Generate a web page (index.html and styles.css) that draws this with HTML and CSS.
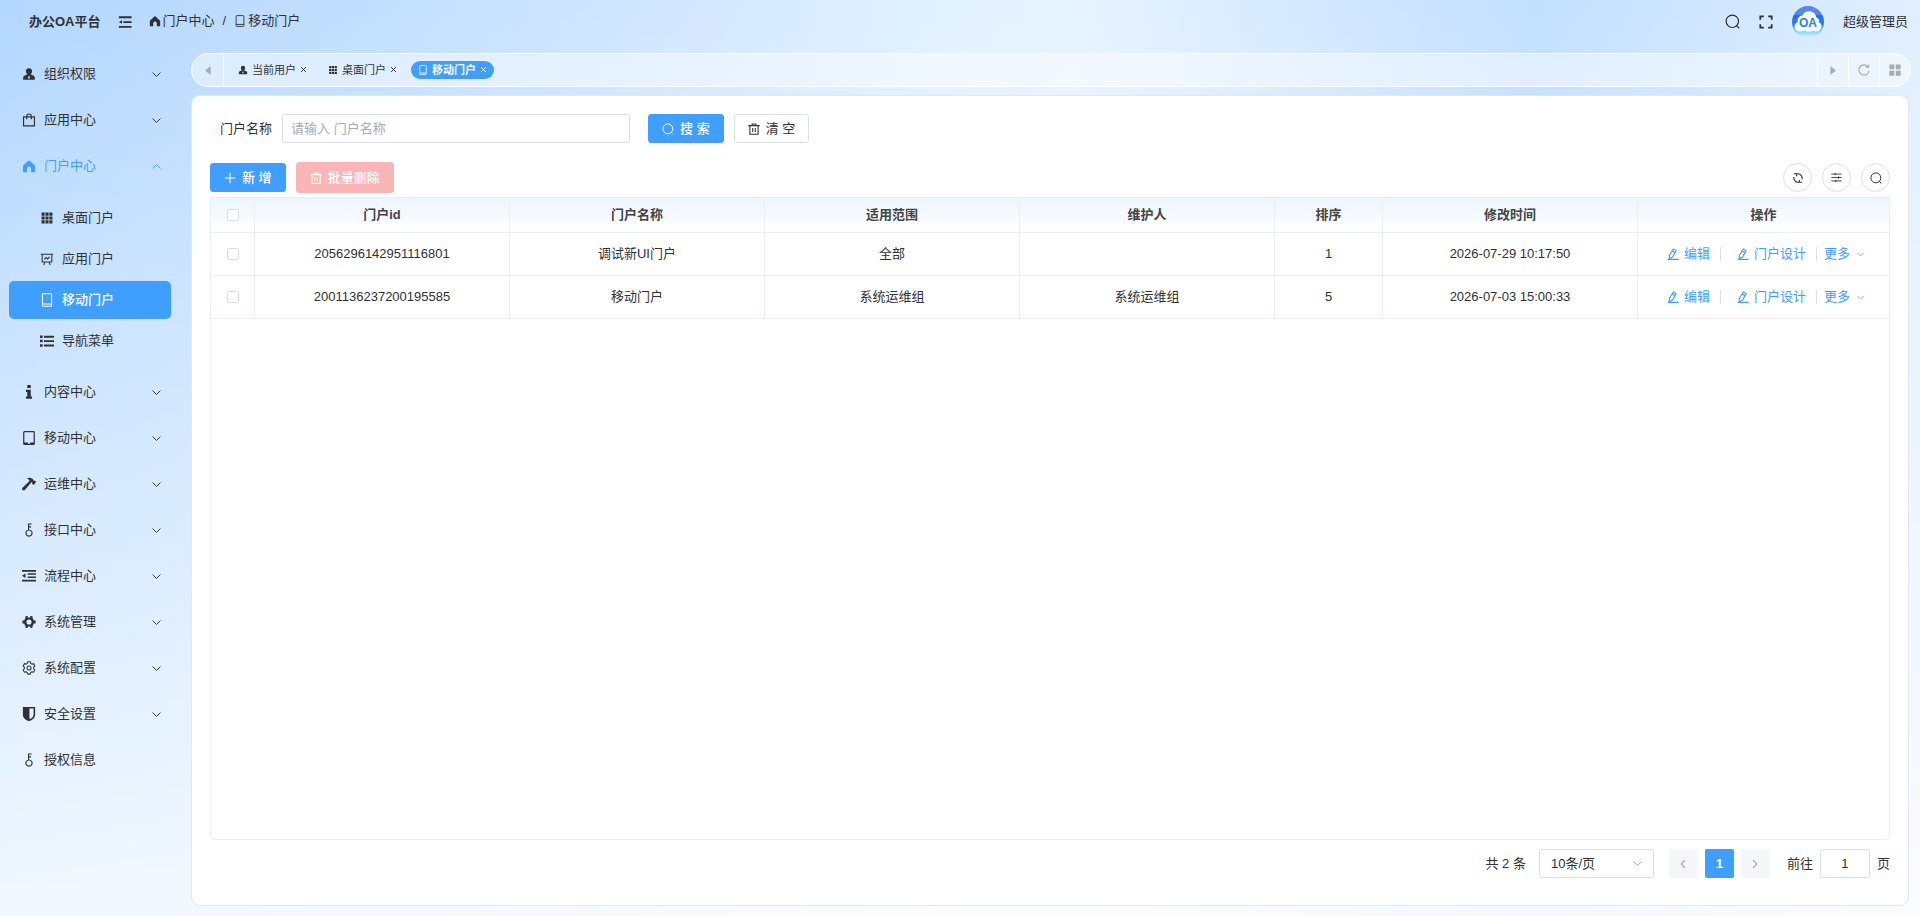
FILE: index.html
```html
<!DOCTYPE html>
<html lang="zh-CN">
<head>
    <meta charset="UTF-8">
    <meta name="viewport" content="width=device-width, initial-scale=1.0">
    <title>办公OA平台</title>
    <link rel="stylesheet" href="styles.css">
</head>
<body>
    <!-- Icon sprite -->
    <svg class="sprite" aria-hidden="true">
        <symbol id="i-user" viewBox="-1 -1 18 18"><path fill="currentColor" d="M8 .5a3.900 3.900 0 0 0-3.900 3.900c0 1.700.8 3.200 2 4L2 10.200C1 10.800.5 11.500.5 12.500V15.500h15v-3c0-1-.5-1.700-1.500-2.300L9.900 8.400c1.200-.8 2-2.300 2-4A3.900 3.900 0 0 0 8 .5zM7.300 10.500h1.400l.5 2.700L8 14.300l-1.200-1.100z" fill-rule="evenodd"/></symbol>
        <symbol id="i-bag" viewBox="-1 -1 18 18"><path fill="none" stroke="currentColor" stroke-width="1.500" d="M1 4h14v11.500H1zM5 7V3a3 2.700 0 0 1 6 0V7"/></symbol>
        <symbol id="i-home" viewBox="-1 -1 18 18"><path fill="currentColor" d="M8 .5.300 7.500V16h5v-4.500a2.700 2.700 0 0 1 5.400 0V16h5V7.500z"/></symbol>
        <symbol id="i-grid" viewBox="0 0 18 18"><path fill="currentColor" d="M2 2h4v4H2zM7 2h4v4H7zM12 2h4v4h-4zM2 7h4v4H2zM7 7h4v4H7zM12 7h4v4h-4zM2 12h4v4H2zM7 12h4v4H7zM12 12h4v4h-4z"/></symbol>
        <symbol id="i-board" viewBox="0 0 16 16"><path fill="none" stroke="currentColor" stroke-width="1.200" d="M1 2.500h14M2.500 2.500v9h11v-9M5.500 11.500 4.300 15M10.500 11.500l1.200 3.500M4.900 8.500 7 6.300l1.600 1.600L11 5.500"/></symbol>
        <symbol id="i-phone" viewBox="0 0 16 16"><path fill="none" stroke="currentColor" stroke-width="1.200" d="M3.800.8h8.400a1 1 0 0 1 1 1v12.400a1 1 0 0 1-1 1H3.800a1 1 0 0 1-1-1V1.800a1 1 0 0 1 1-1zM2.800 12.600h10.400"/></symbol>
        <symbol id="i-list" viewBox="0 0 16 16"><path fill="currentColor" d="M0 1.700h3v2.800H0zM4.500 2H16v2.200H4.500zM0 6.700h3v2.800H0zM4.500 7H16v2.200H4.500zM0 11.700h3v2.800H0zM4.500 12H16v2.200H4.500z"/></symbol>
        <symbol id="i-info" viewBox="0 0 16 16"><path fill="currentColor" d="M6 0h4v3.500H6zM4.500 5.500H10V13h1.500v2.700h-7V13H6V8H4.500z"/></symbol>
        <symbol id="i-tablet" viewBox="0 0 16 16"><path fill="none" stroke="currentColor" stroke-width="1.400" d="M3 .7h10a1 1 0 0 1 1 1v12.600a1 1 0 0 1-1 1H3a1 1 0 0 1-1-1V1.700a1 1 0 0 1 1-1z"/><path fill="currentColor" d="M2 13h4.800v2.300H2zM9.200 13H14v2.300H9.200z"/></symbol>
        <symbol id="i-hammer" viewBox="0 0 16 16"><path fill="currentColor" d="M5.500 1.500C8 .3 10.800.7 12.500 2.700l1 1.800 1.300-.5L16 5.700 13.500 9l-1.900-1.400.1-1.300-.7-.5L3 15.200.3 15l-.1-2.300L8.700 4.700C8 3 7 2.300 5.500 1.500z"/></symbol>
        <symbol id="i-key" viewBox="0 0 16 16"><path fill="none" stroke="currentColor" stroke-width="1.300" d="M8 8a3.500 3.500 0 1 0 .01 0zM7.500 8V1.200h3.500M7.500 4.400h2.900"/></symbol>
        <symbol id="i-fold" viewBox="0 0 16 16"><path fill="currentColor" d="M0 1h16v2.200H0zM6.500 4.800h9.500v1.900H6.500zM6.500 8.500h9.500v1.900H6.500zM0 12.200h16v2.200H0zM0 7.700 4 5v5.300z"/></symbol>
        <symbol id="i-menu" viewBox="0 0 16 16"><path fill="currentColor" d="M1 1.500h14.500v2.200H1zM6 7h9.500v2H6zM1 12.500h14.500v2.200H1zM1 8l3.500-2v4z"/></symbol>
        <symbol id="i-gear" viewBox="-1 -1 18 18"><path fill="currentColor" fill-rule="evenodd" d="M3.800.3h2.500v1.900h3.400V.3h2.500l.6 2.800 1.500 3H16.500v3.800h-2.200l-1.500 3-.6 2.800H9.700v-1.900H6.300v1.900H3.800l-.6-2.800-1.500-3H-.5V6.100h2.200l1.500-3zM8 4.700a3.300 3.300 0 1 0 0 6.600 3.300 3.300 0 0 0 0-6.600z"/></symbol>
        <symbol id="i-setting" viewBox="0 0 16 16"><path fill="none" stroke="currentColor" stroke-width="1.200" stroke-linejoin="round" d="M6.500.9h3l.5 1.900 1.300.8 1.900-.6 1.500 2.600-1.400 1.500v1.700l1.400 1.500-1.500 2.600-1.900-.6-1.300.8-.5 1.900h-3L6 13.100l-1.300-.8-1.900.6-1.500-2.600 1.400-1.500V7.100L1.300 5.600 2.800 3l1.900.6L6 2.800z"/><circle cx="8" cy="8" r="2.300" fill="none" stroke="currentColor" stroke-width="1.200"/></symbol>
        <symbol id="i-shield" viewBox="0 0 16 16"><path fill="currentColor" fill-rule="evenodd" d="M1 0h14v9c0 3.500-3.300 5.800-7 7-3.700-1.200-7-3.500-7-7zM8.500 1.800v12c2.500-1 4.700-2.500 4.700-5v-7z"/></symbol>
        <symbol id="i-down" viewBox="0 0 16 16"><path fill="none" stroke="currentColor" stroke-width="1.700" d="M1 4.500l7 7 7-7"/></symbol>
        <symbol id="i-up" viewBox="0 0 16 16"><path fill="none" stroke="currentColor" stroke-width="1.700" d="M1 11.500l7-7 7 7"/></symbol>
        <symbol id="i-left" viewBox="0 0 16 16"><path fill="none" stroke="currentColor" stroke-width="1.600" d="M10.500 3l-5 5 5 5"/></symbol>
        <symbol id="i-right" viewBox="0 0 16 16"><path fill="none" stroke="currentColor" stroke-width="1.600" d="M5.500 3l5 5-5 5"/></symbol>
        <symbol id="i-close" viewBox="0 0 16 16"><path fill="none" stroke="currentColor" stroke-width="2.200" d="M2.500 2.500l11 11M13.500 2.500l-11 11"/></symbol>
        <symbol id="i-search" viewBox="0 0 16 16"><circle cx="7.800" cy="7.800" r="6.600" fill="none" stroke="currentColor" stroke-width="1.300"/><path stroke="currentColor" stroke-width="1.300" d="M12.400 12.400l2.800 2.800"/></symbol>
        <symbol id="i-full" viewBox="0 0 16 16"><path fill="none" stroke="currentColor" stroke-width="2" d="M1.500 5.500v-4h4M10.500 1.500h4v4M14.500 10.500v4h-4M5.500 14.500h-4v-4"/></symbol>
        <symbol id="i-caret-left" viewBox="0 0 16 16"><path fill="currentColor" d="M11.500 2.500v12L4 8.500z"/></symbol>
        <symbol id="i-caret-right" viewBox="0 0 16 16"><path fill="currentColor" d="M4.500 2.500v12l7.500-6z"/></symbol>
        <symbol id="i-reload" viewBox="0 0 16 16"><path fill="none" stroke="currentColor" stroke-width="1.500" d="M14.800 9A6.800 6.800 0 1 1 13.300 3.600M14.300.5v3.700h-3.800"/></symbol>
        <symbol id="i-windows" viewBox="0 0 16 16"><path fill="currentColor" d="M.5.500h6.500v6.500H.5zM9 .5h6.500v6.500H9zM.5 9h6.500v6.500H.5zM9 9h6.500v6.500H9z"/></symbol>
        <symbol id="i-trash" viewBox="0 0 16 16"><path fill="none" stroke="currentColor" stroke-width="1.400" d="M.5 3.500h15M5.500 3.500V1.300h5v2.200M2.500 3.500V15h11V3.500M6.300 6.500v5.500M9.700 6.500v5.500"/></symbol>
        <symbol id="i-plus" viewBox="0 0 16 16"><path stroke="currentColor" stroke-width="1.400" d="M8 1v14M1 8h14"/></symbol>
        <symbol id="i-refresh" viewBox="0 0 16 16"><path fill="none" stroke="currentColor" stroke-width="1.500" d="M6 2.800A5.500 5.500 0 0 1 13.500 8v1.500M10 13.200A5.500 5.500 0 0 1 2.500 8V6.500M2.500 2.300h3.700v3.200M13.500 13.700H9.800v-3.200"/></symbol>
        <symbol id="i-filter" viewBox="0 0 16 16"><path fill="none" stroke="currentColor" stroke-width="1.300" d="M.5 3h15M.5 8h15M.5 13h15M6 1.300v3.400M11 6.300v3.400M7 11.300v3.400"/></symbol>
        <symbol id="i-edit" viewBox="0 0 16 16"><path fill="none" stroke="currentColor" stroke-width="1.500" d="M8.500 1.300l3.600 2.200-4.600 8.500-4.600 2.200.3-4.700zM7 4l3.800 2.200M1 15.200h14.500"/></symbol>
    </svg>

    <div class="layout">
        <!-- Top bar -->
        <header class="header">
            <h1 class="logo">办公OA平台</h1>
            <button class="icon-btn menu-btn" aria-label="折叠菜单"><svg class="icon-md"><use href="#i-menu"/></svg></button>
            <nav class="breadcrumb">
                <a href="#"><svg class="icon-sm"><use href="#i-home"/></svg>门户中心</a>
                <span class="slash">/</span>
                <a href="#"><svg class="icon-sm"><use href="#i-phone"/></svg>移动门户</a>
            </nav>
            <div class="header-right">
                <button class="icon-btn" aria-label="搜索"><svg class="icon-lg"><use href="#i-search"/></svg></button>
                <button class="icon-btn" aria-label="全屏"><svg class="icon-md"><use href="#i-full"/></svg></button>
                <div class="avatar">
                    <svg viewBox="0 0 32 32">
                        <defs>
                            <linearGradient id="sky" x1="0" y1="0" x2="0" y2="1">
                                <stop offset="0" stop-color="#5d86e8"/>
                                <stop offset=".28" stop-color="#5488e9"/>
                                <stop offset=".3" stop-color="#2868df"/>
                                <stop offset=".6" stop-color="#2f8ae6"/>
                                <stop offset=".78" stop-color="#7fd0f5"/>
                                <stop offset="1" stop-color="#e2f7fd"/>
                            </linearGradient>
                        </defs>
                        <circle cx="16" cy="16" r="16" fill="url(#sky)"/>
                        <path fill="#f4f9ff" d="M8 25.500c-3.500 0-5.500-2.400-5.500-5 0-2.300 1.300-4 3.300-4.600C5 12.500 7 9.600 10.500 9.500 11.700 6.800 14 5.300 17 5.300c4 0 6.800 2.600 7.200 6 2.500 1 3.300 2.900 2.800 5 1.800.9 2.700 2.500 2.500 4.500-.3 2.700-2.300 4.700-5 4.700-1.400 0-2-.3-3-.8-2.800 1.300-6.500 1.300-9 0-1.200.6-2.700.8-4.500.8z"/>
                    </svg>
                    <span>OA</span>
                </div>
                <span class="username">超级管理员</span>
            </div>
        </header>

        <!-- Sidebar menu -->
        <nav class="sidebar">
            <a class="menu-item" href="#"><svg class="icon-md"><use href="#i-user"/></svg>组织权限<svg class="arrow"><use href="#i-down"/></svg></a>
            <a class="menu-item" href="#"><svg class="icon-md"><use href="#i-bag"/></svg>应用中心<svg class="arrow"><use href="#i-down"/></svg></a>
            <a class="menu-item open" href="#"><svg class="icon-md"><use href="#i-home"/></svg>门户中心<svg class="arrow"><use href="#i-up"/></svg></a>
            <div class="submenu">
                <a href="#"><svg class="icon-md"><use href="#i-grid"/></svg>桌面门户</a>
                <a href="#"><svg class="icon-md"><use href="#i-board"/></svg>应用门户</a>
                <a class="active" href="#"><svg class="icon-md"><use href="#i-phone"/></svg>移动门户</a>
                <a href="#"><svg class="icon-md"><use href="#i-list"/></svg>导航菜单</a>
            </div>
            <a class="menu-item" href="#"><svg class="icon-md"><use href="#i-info"/></svg>内容中心<svg class="arrow"><use href="#i-down"/></svg></a>
            <a class="menu-item" href="#"><svg class="icon-md"><use href="#i-tablet"/></svg>移动中心<svg class="arrow"><use href="#i-down"/></svg></a>
            <a class="menu-item" href="#"><svg class="icon-md"><use href="#i-hammer"/></svg>运维中心<svg class="arrow"><use href="#i-down"/></svg></a>
            <a class="menu-item" href="#"><svg class="icon-md"><use href="#i-key"/></svg>接口中心<svg class="arrow"><use href="#i-down"/></svg></a>
            <a class="menu-item" href="#"><svg class="icon-md"><use href="#i-fold"/></svg>流程中心<svg class="arrow"><use href="#i-down"/></svg></a>
            <a class="menu-item" href="#"><svg class="icon-md"><use href="#i-gear"/></svg>系统管理<svg class="arrow"><use href="#i-down"/></svg></a>
            <a class="menu-item" href="#"><svg class="icon-md"><use href="#i-setting"/></svg>系统配置<svg class="arrow"><use href="#i-down"/></svg></a>
            <a class="menu-item" href="#"><svg class="icon-md"><use href="#i-shield"/></svg>安全设置<svg class="arrow"><use href="#i-down"/></svg></a>
            <a class="menu-item" href="#"><svg class="icon-md"><use href="#i-key"/></svg>授权信息</a>
        </nav>

        <main class="main">
            <!-- Opened tabs -->
            <div class="tabs">
                <button class="tabs-btn first" aria-label="向左"><svg class="icon-sm"><use href="#i-caret-left"/></svg></button>
                <div class="tab-list">
                    <a class="tab" href="#"><svg class="icon-tab"><use href="#i-user"/></svg>当前用户<svg class="close"><use href="#i-close"/></svg></a>
                    <a class="tab" href="#"><svg class="icon-tab"><use href="#i-grid"/></svg>桌面门户<svg class="close"><use href="#i-close"/></svg></a>
                    <a class="tab active" href="#"><svg class="icon-tab"><use href="#i-phone"/></svg>移动门户<svg class="close"><use href="#i-close"/></svg></a>
                </div>
                <button class="tabs-btn" aria-label="向右"><svg class="icon-sm"><use href="#i-caret-right"/></svg></button>
                <button class="tabs-btn" aria-label="刷新"><svg class="icon-sm"><use href="#i-reload"/></svg></button>
                <button class="tabs-btn" aria-label="更多操作"><svg class="icon-sm"><use href="#i-windows"/></svg></button>
            </div>

            <section class="card">
                <!-- Search form -->
                <form class="search-form">
                    <label for="portalName">门户名称</label>
                    <input type="text" id="portalName" placeholder="请输入 门户名称">
                    <button type="button" class="btn primary"><svg class="icon-sm"><use href="#i-search"/></svg>搜 索</button>
                    <button type="reset" class="btn"><svg class="icon-sm"><use href="#i-trash"/></svg>清 空</button>
                </form>

                <!-- Toolbar -->
                <div class="toolbar">
                    <button class="btn primary"><svg class="icon-sm"><use href="#i-plus"/></svg>新 增</button>
                    <button class="btn danger" disabled><svg class="icon-sm"><use href="#i-trash"/></svg>批量删除</button>
                    <div class="tools">
                        <button class="circle" aria-label="刷新"><svg class="icon-sm"><use href="#i-refresh"/></svg></button>
                        <button class="circle" aria-label="列设置"><svg class="icon-xs"><use href="#i-filter"/></svg></button>
                        <button class="circle" aria-label="显示搜索"><svg class="icon-sm"><use href="#i-search"/></svg></button>
                    </div>
                </div>

                <div class="table-wrap">
                    <table>
                        <colgroup>
                            <col class="col-check"><col class="col-text"><col class="col-text"><col class="col-text"><col class="col-text"><col class="col-sort"><col class="col-text"><col class="col-action">
                        </colgroup>
                        <thead>
                            <tr>
                                <th><input type="checkbox" aria-label="全选"></th>
                                <th>门户id</th>
                                <th>门户名称</th>
                                <th>适用范围</th>
                                <th>维护人</th>
                                <th>排序</th>
                                <th>修改时间</th>
                                <th>操作</th>
                            </tr>
                        </thead>
                        <tbody>
                            <tr>
                                <td><input type="checkbox" aria-label="选择行"></td>
                                <td>2056296142951116801</td>
                                <td>调试新UI门户</td>
                                <td>全部</td>
                                <td></td>
                                <td>1</td>
                                <td>2026-07-29 10:17:50</td>
                                <td>
                                    <div class="actions">
                                        <a href="#"><svg class="icon-sm"><use href="#i-edit"/></svg>编辑</a>
                                        <a href="#"><svg class="icon-sm"><use href="#i-edit"/></svg>门户设计</a>
                                        <a class="more" href="#">更多<svg class="arrow-sm"><use href="#i-down"/></svg></a>
                                    </div>
                                </td>
                            </tr>
                            <tr>
                                <td><input type="checkbox" aria-label="选择行"></td>
                                <td>2001136237200195585</td>
                                <td>移动门户</td>
                                <td>系统运维组</td>
                                <td>系统运维组</td>
                                <td>5</td>
                                <td>2026-07-03 15:00:33</td>
                                <td>
                                    <div class="actions">
                                        <a href="#"><svg class="icon-sm"><use href="#i-edit"/></svg>编辑</a>
                                        <a href="#"><svg class="icon-sm"><use href="#i-edit"/></svg>门户设计</a>
                                        <a class="more" href="#">更多<svg class="arrow-sm"><use href="#i-down"/></svg></a>
                                    </div>
                                </td>
                            </tr>
                        </tbody>
                    </table>
                </div>

                <!-- Pagination -->
                <div class="pagination">
                    <span class="total">共 2 条</span>
                    <div class="page-size">
                        <select aria-label="每页条数">
                            <option>10条/页</option>
                            <option>20条/页</option>
                            <option>50条/页</option>
                        </select>
                        <svg class="arrow"><use href="#i-down"/></svg>
                    </div>
                    <div class="pager">
                        <button disabled aria-label="上一页"><svg class="icon-sm"><use href="#i-left"/></svg></button>
                        <button class="active">1</button>
                        <button disabled aria-label="下一页"><svg class="icon-sm"><use href="#i-right"/></svg></button>
                    </div>
                    <label for="jumper">前往</label>
                    <input type="text" id="jumper" value="1">
                    <span>页</span>
                </div>
            </section>
        </main>
    </div>
</body>
</html>
```
FILE: styles.css
```css
* {
    box-sizing: border-box;
}

body {
    margin: 0;
    font-family: "Liberation Sans", "Noto Sans CJK SC", sans-serif;
    font-size: 13px;
    line-height: 20px;
    color: #303133;
}

a {
    color: inherit;
    text-decoration: none;
}

button, input, select {
    font: inherit;
    color: inherit;
}

button {
    padding: 0;
    border: none;
    background: none;
    cursor: pointer;
}

svg {
    display: block;
    flex: none;
}

.sprite {
    display: none;
}

/* Icon sizes */
.icon-lg {
    width: 15px;
    height: 15px;
}

.icon-md {
    width: 14px;
    height: 14px;
}

.icon-sm {
    width: 12px;
    height: 12px;
}

.icon-xs {
    width: 11px;
    height: 11px;
}

.icon-tab {
    width: 10px;
    height: 10px;
}

.arrow {
    width: 9px;
    height: 9px;
}

/* Page layout */
.layout {
    display: grid;
    grid-template-columns: 191px 1fr;
    grid-template-rows: 43px 1fr;
    min-height: 100vh;
    background:
        linear-gradient(180deg, rgba(255, 255, 255, 0), rgba(255, 255, 255, 0.82)),
        linear-gradient(90deg, #b3d7ff 0%, #c2dfff 20%, #d1e6ff 34%, #e2f1ff 49%, #e6f3ff 56%, #dfeeff 62%, #cde4ff 73%, #c2dfff 80%, #e0efff 100%);
}

/* Header */
.header {
    grid-column: 1 / 3;
    display: flex;
    align-items: center;
    padding: 0 12px 0 29px;
}

.logo {
    margin: 0;
    font-size: 13px;
    font-weight: bold;
}

.menu-btn {
    margin: 0 17px;
}

.breadcrumb {
    display: flex;
    align-items: center;
    gap: 8px;
    padding-bottom: 2px;
}

.breadcrumb a {
    display: flex;
    align-items: center;
    gap: 2px;
}

.header-right {
    display: flex;
    align-items: center;
    gap: 19px;
    margin-left: auto;
}

.avatar {
    position: relative;
    width: 32px;
    height: 32px;
}

.avatar span {
    position: absolute;
    inset: 0;
    text-align: center;
    font-size: 12px;
    line-height: 34px;
    font-weight: bold;
    color: #2d7fe0;
}

/* Sidebar */
.sidebar {
    padding-top: 8px;
}

.menu-item {
    display: flex;
    align-items: center;
    gap: 8px;
    height: 46px;
    padding: 0 30px 0 22px;
}

.menu-item .arrow {
    margin-left: auto;
}

.menu-item.open {
    color: #409eff;
}

.submenu {
    display: flex;
    flex-direction: column;
    gap: 3px;
    padding: 10px 20px 9px 9px;
}

.submenu a {
    display: flex;
    align-items: center;
    gap: 8px;
    height: 38px;
    padding-left: 31px;
    border-radius: 5px;
}

.submenu .active {
    background: #409eff;
    color: #fff;
    font-weight: 500;
}

/* Main area */
.main {
    display: flex;
    flex-direction: column;
    gap: 8px;
    min-width: 0;
    padding: 10px 9px 10px 0;
}

/* Tabs */
.tabs {
    display: flex;
    height: 34px;
    border: 1px solid #fff;
    border-radius: 17px;
    background: rgba(255, 255, 255, 0.45);
}

.tabs-btn {
    display: flex;
    align-items: center;
    justify-content: center;
    width: 31px;
    border-left: 1px solid #fff;
    color: #a8abb2;
}

.tabs-btn.first {
    width: 32px;
    border-left: none;
    border-right: 1px solid #fff;
}

.tab-list {
    flex: 1;
    display: flex;
    align-items: center;
    gap: 7px;
    padding-left: 7px;
    padding-bottom: 1px;
}

.tab {
    display: flex;
    align-items: center;
    gap: 4px;
    height: 18px;
    padding: 0 7px;
    border-radius: 9px;
    font-size: 11px;
    line-height: 18px;
}

.tab.active {
    background: #409eff;
    color: #fff;
    font-weight: bold;
}

.close {
    width: 7px;
    height: 7px;
}

/* Content card */
.card {
    flex: 1;
    display: flex;
    flex-direction: column;
    margin-right: 2px;
    padding: 18px 18px 27px;
    border: 1px solid #e4e7ed;
    border-radius: 9px;
    background: #fff;
}

input[type="text"], select {
    height: 29px;
    border: 1px solid #dcdfe6;
    border-radius: 3px;
    background: #fff;
    outline: none;
}

input[type="text"]:focus {
    border-color: #409eff;
}

.btn {
    display: flex;
    align-items: center;
    gap: 6px;
    height: 29px;
    padding: 0 13px;
    border: 1px solid #dcdfe6;
    border-radius: 3px;
    background: #fff;
}

.btn.primary {
    border-color: #409eff;
    background: #409eff;
    color: #fff;
    font-weight: 500;
}

.btn.danger {
    height: 31px;
    border-color: #fab6b6;
    background: #fab6b6;
    color: #fff;
    font-weight: 500;
    cursor: not-allowed;
}

/* Search form */
.search-form {
    display: flex;
    align-items: center;
    gap: 10px;
    margin: 0 0 19px;
    padding-left: 10px;
}

.search-form input {
    width: 348px;
    margin-right: 8px;
    padding: 0 8px;
}

.search-form input::placeholder {
    color: #a8abb2;
}

/* Toolbar */
.toolbar {
    display: flex;
    align-items: center;
    gap: 10px;
    margin-bottom: 4px;
}

.tools {
    display: flex;
    gap: 10px;
    margin-left: auto;
}

.circle {
    display: flex;
    align-items: center;
    justify-content: center;
    width: 29px;
    height: 29px;
    border: 1px solid #dcdfe6;
    border-radius: 50%;
}

/* Table */
.table-wrap {
    flex: 1;
    border: 1px solid #ebeef5;
    border-radius: 0 0 4px 4px;
}

table {
    width: 100%;
    table-layout: fixed;
    border-collapse: separate;
    border-spacing: 0;
}

.col-check {
    width: 44px;
}

.col-sort {
    width: 108px;
}

.col-action {
    width: 251px;
}

th, td {
    padding: 0;
    text-align: center;
    border-right: 1px solid #ebeef5;
    border-bottom: 1px solid #ebeef5;
}

th:last-child, td:last-child {
    border-right: none;
}

thead tr {
    background: linear-gradient(180deg, #ecf5ff, #fff);
}

th {
    height: 35px;
    color: #444;
}

td {
    height: 43px;
}

input[type="checkbox"] {
    appearance: none;
    display: block;
    width: 12px;
    height: 12px;
    margin: 0 auto;
    border: 1px solid #dcdfe6;
    border-radius: 2px;
    background: #fff;
}

input[type="checkbox"]:checked {
    border-color: #409eff;
    background: #409eff;
}

.actions {
    display: flex;
    align-items: center;
    justify-content: center;
    padding-left: 4px;
    color: #409eff;
}

.actions a {
    display: flex;
    align-items: center;
    gap: 5px;
}

.actions a + a::before {
    content: "";
    width: 1px;
    height: 14px;
    margin: 0 11px 0 5px;
    background: #dcdfe6;
}

.actions a + a {
    margin-left: 5px;
}

.actions .more {
    gap: 7px;
}

.actions .more::before {
    margin-right: 0;
}

.arrow-sm {
    width: 7px;
    height: 7px;
}

/* Pagination */
.pagination {
    display: flex;
    align-items: center;
    justify-content: flex-end;
    gap: 7px;
    margin-top: 9px;
}

.total {
    margin-right: 6px;
}

.page-size {
    position: relative;
    width: 115px;
    margin-right: 8px;
}

.page-size select {
    appearance: none;
    display: block;
    width: 100%;
    padding: 0 11px;
}

.page-size .arrow {
    position: absolute;
    right: 12px;
    top: 10px;
    color: #a8abb2;
    pointer-events: none;
}

.pager {
    display: flex;
    gap: 7px;
    margin-right: 10px;
}

.pager button {
    display: flex;
    align-items: center;
    justify-content: center;
    width: 29px;
    height: 29px;
    border-radius: 2px;
    background: #f5f7fa;
    color: #a8abb2;
}

.pager .active {
    background: #409eff;
    color: #fff;
    font-weight: bold;
}

#jumper {
    width: 50px;
    text-align: center;
}
```
